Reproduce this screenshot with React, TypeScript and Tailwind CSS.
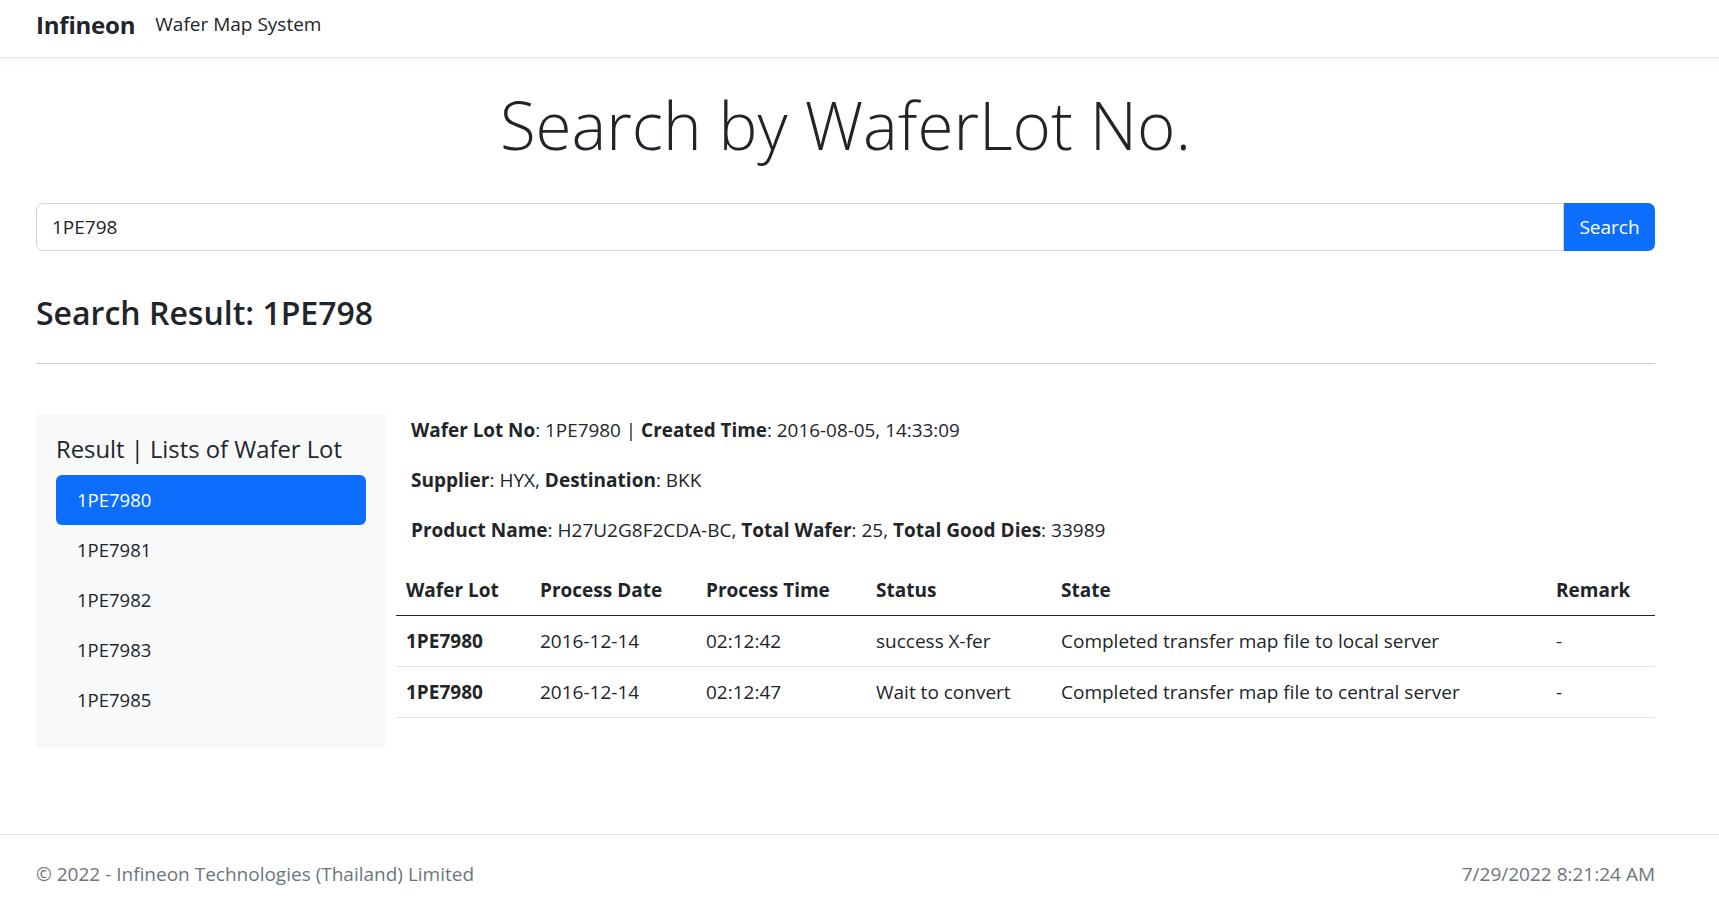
import { useState } from "react";

const lots = ["1PE7980", "1PE7981", "1PE7982", "1PE7983", "1PE7985"];

const history = [
  {
    lot: "1PE7980",
    date: "2016-12-14",
    time: "02:12:42",
    status: "success X-fer",
    state: "Completed transfer map file to local server",
    remark: "-",
  },
  {
    lot: "1PE7980",
    date: "2016-12-14",
    time: "02:12:47",
    status: "Wait to convert",
    state: "Completed transfer map file to central server",
    remark: "-",
  },
];

export default function App() {
  const [query, setQuery] = useState("1PE798");
  const [selected, setSelected] = useState("1PE7980");

  return (
    <div className="h-screen flex flex-col bg-white text-[#212529] font-['Open_Sans',sans-serif] overflow-hidden">
      {/* Navbar */}
      <header className="h-[58px] shrink-0 flex items-center pl-[36px] pb-[8px] border-b border-[#e2e0e8] shadow-[0_6px_14px_rgba(0,0,0,0.03)]">
        <span className="text-[24px] font-bold leading-none tracking-[-0.2px]">Infineon</span>
        <span className="ml-[20px] text-[19px] leading-none">Wafer Map System</span>
      </header>

      <main className="flex-1 pl-[36px] pr-[64px]">
        <h1 className="mt-[28px] text-center text-[65.5px] font-light leading-[77px]">
          Search by WaferLot No.
        </h1>

        {/* Search bar */}
        <div className="mt-[40px] flex h-[48px]">
          <input
            value={query}
            onChange={(e) => setQuery(e.target.value)}
            className="flex-1 border border-[#ced4da] rounded-l-[7px] px-[15px] text-[19px] outline-none"
          />
          <button className="w-[91px] bg-[#0d6efd] text-white text-[19px] rounded-r-[7px]">
            Search
          </button>
        </div>

        <h3 className="mt-[41px] text-[32px] font-semibold leading-[42px]">Search Result: 1PE798</h3>
        <hr className="mt-[29px] border-0 border-t border-[#c8c9ca]" />

        <div className="mt-[50px] flex">
          {/* Lot list */}
          <div className="w-[350px] h-[334px] shrink-0 bg-[#f8f9fa] px-[20px] pt-[20px]">
            <h5 className="text-[23.8px] leading-[30px] mb-[11px]">Result | Lists of Wafer Lot</h5>
            <div className="flex flex-col">
              {lots.map((lot) => (
                <button
                  key={lot}
                  onClick={() => setSelected(lot)}
                  className={`h-[50px] text-left pl-[21px] text-[18.5px] rounded-[6px] ${
                    selected === lot ? "bg-[#0d6efd] text-white" : "text-[#212529]"
                  }`}
                >
                  {lot}
                </button>
              ))}
            </div>
          </div>

          {/* Details */}
          <div className="flex-1 pl-[10px] text-[19px] leading-[30px]">
            <div className="pl-[15px] pt-[1px]">
              <p className="mb-[20px] text-[18.9px]">
                <b className="font-bold">Wafer Lot No</b>: 1PE7980 | <b className="font-bold">Created Time</b>: 2016-08-05, 14:33:09
              </p>
              <p className="mb-[20px]">
                <b className="font-bold">Supplier</b>: HYX, <b className="font-bold">Destination</b>: BKK
              </p>
              <p className="mb-[20px]">
                <b className="font-bold">Product Name</b>: H27U2G8F2CDA-BC, <b className="font-bold">Total Wafer</b>: 25,{" "}
                <b className="font-bold">Total Good Dies</b>: 33989
              </p>
            </div>

            <table className="w-full table-fixed border-collapse">
              <colgroup>
                <col className="w-[134px]" />
                <col className="w-[166px]" />
                <col className="w-[170px]" />
                <col className="w-[185px]" />
                <col />
                <col className="w-[109px]" />
              </colgroup>
              <thead>
                <tr className="border-b border-[#212529]">
                  {["Wafer Lot", "Process Date", "Process Time", "Status", "State", "Remark"].map((h) => (
                    <th key={h} className="h-[50px] px-[10px] text-left font-bold">
                      {h}
                    </th>
                  ))}
                </tr>
              </thead>
              <tbody>
                {history.map((r, i) => (
                  <tr key={i} className="border-b border-[#dee2e6]">
                    <td className="h-[51px] px-[10px] font-bold">{r.lot}</td>
                    <td className="px-[10px]">{r.date}</td>
                    <td className="px-[10px]">{r.time}</td>
                    <td className="px-[10px]">{r.status}</td>
                    <td className="px-[10px]">{r.state}</td>
                    <td className="px-[10px]">{r.remark}</td>
                  </tr>
                ))}
              </tbody>
            </table>
          </div>
        </div>
      </main>

      {/* Footer */}
      <footer className="h-[74px] shrink-0 border-t border-[#dee2e6] pl-[36px] pr-[64px] pt-[24px] flex justify-between text-[19px] leading-[30px] text-[#6c757d]">
        <span>© 2022 - Infineon Technologies (Thailand) Limited</span>
        <span>7/29/2022 8:21:24 AM</span>
      </footer>
    </div>
  );
}
